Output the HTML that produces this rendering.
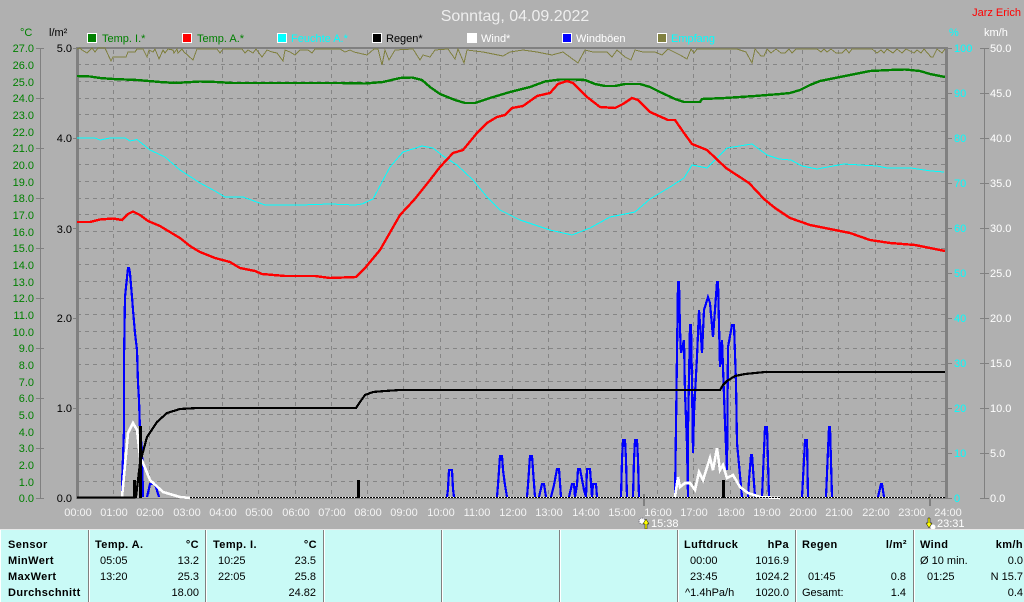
<!DOCTYPE html>
<html><head><meta charset="utf-8"><style>
html,body{margin:0;padding:0;background:#b0b0b0;width:1024px;height:602px;overflow:hidden}
svg{display:block;font-family:"Liberation Sans",Arial,sans-serif;font-size:11px}
.l{fill:#008000;text-anchor:end}.b{fill:#000;text-anchor:end}.c{fill:#0ff}.w{fill:#fff}
.h{fill:#f4f4f4;text-anchor:middle}
.t{fill:#000}.tb{fill:#000;font-weight:bold;letter-spacing:.4px}.r{text-anchor:end}
.g line{stroke:#858585;stroke-width:1;stroke-dasharray:4 4}
polyline{fill:none;shape-rendering:crispEdges}
</style></head><body>
<svg width="1024" height="602" viewBox="0 0 1024 602" xmlns="http://www.w3.org/2000/svg">
<rect width="1024" height="602" fill="#b0b0b0"/>
<text x="515" y="21" text-anchor="middle" fill="#eee" font-size="16">Sonntag, 04.09.2022</text>
<text x="1021" y="16" text-anchor="end" fill="#f00" font-size="11">Jarz Erich</text>
<text x="20" y="36" fill="#008000">°C</text><text x="49" y="36" fill="#000">l/m²</text>
<text x="949" y="36" fill="#0ff">%</text><text x="984" y="36" fill="#fff">km/h</text>
<g stroke="#fff" stroke-width="1" shape-rendering="crispEdges">
<rect x="87.5" y="33.5" width="9" height="9" fill="#008000"/>
<rect x="182.5" y="33.5" width="9" height="9" fill="#f00"/>
<rect x="277.5" y="33.5" width="9" height="9" fill="#0ff"/>
<rect x="372.5" y="33.5" width="9" height="9" fill="#000"/>
<rect x="467.5" y="33.5" width="9" height="9" fill="#fff"/>
<rect x="562.5" y="33.5" width="9" height="9" fill="#00f"/>
<rect x="657.5" y="33.5" width="9" height="9" fill="#808040"/>
</g>
<text x="102" y="42" fill="#008000">Temp. I.*</text><text x="197" y="42" fill="#008000">Temp. A.*</text>
<text x="291" y="42" fill="#0ff">Feuchte A.*</text><text x="386" y="42" fill="#000">Regen*</text>
<text x="481" y="42" fill="#fff">Wind*</text><text x="576" y="42" fill="#fff">Windböen</text>
<text x="671" y="42" fill="#0ff">Empfang</text>

<g class="g" shape-rendering="crispEdges">
<line x1="77" x2="945" y1="64.5" y2="64.5"/><line x1="77" x2="945" y1="81.5" y2="81.5"/><line x1="77" x2="945" y1="98.5" y2="98.5"/><line x1="77" x2="945" y1="114.5" y2="114.5"/><line x1="77" x2="945" y1="131.5" y2="131.5"/><line x1="77" x2="945" y1="148.5" y2="148.5"/><line x1="77" x2="945" y1="164.5" y2="164.5"/><line x1="77" x2="945" y1="181.5" y2="181.5"/><line x1="77" x2="945" y1="198.5" y2="198.5"/><line x1="77" x2="945" y1="214.5" y2="214.5"/><line x1="77" x2="945" y1="231.5" y2="231.5"/><line x1="77" x2="945" y1="248.5" y2="248.5"/><line x1="77" x2="945" y1="264.5" y2="264.5"/><line x1="77" x2="945" y1="281.5" y2="281.5"/><line x1="77" x2="945" y1="298.5" y2="298.5"/><line x1="77" x2="945" y1="314.5" y2="314.5"/><line x1="77" x2="945" y1="331.5" y2="331.5"/><line x1="77" x2="945" y1="348.5" y2="348.5"/><line x1="77" x2="945" y1="364.5" y2="364.5"/><line x1="77" x2="945" y1="381.5" y2="381.5"/><line x1="77" x2="945" y1="398.5" y2="398.5"/><line x1="77" x2="945" y1="414.5" y2="414.5"/><line x1="77" x2="945" y1="431.5" y2="431.5"/><line x1="77" x2="945" y1="448.5" y2="448.5"/><line x1="77" x2="945" y1="464.5" y2="464.5"/><line x1="77" x2="945" y1="481.5" y2="481.5"/>
<line y1="50" y2="497" x1="113.5" x2="113.5"/><line y1="50" y2="497" x1="149.5" x2="149.5"/><line y1="50" y2="497" x1="186.5" x2="186.5"/><line y1="50" y2="497" x1="222.5" x2="222.5"/><line y1="50" y2="497" x1="258.5" x2="258.5"/><line y1="50" y2="497" x1="295.5" x2="295.5"/><line y1="50" y2="497" x1="331.5" x2="331.5"/><line y1="50" y2="497" x1="367.5" x2="367.5"/><line y1="50" y2="497" x1="403.5" x2="403.5"/><line y1="50" y2="497" x1="440.5" x2="440.5"/><line y1="50" y2="497" x1="476.5" x2="476.5"/><line y1="50" y2="497" x1="512.5" x2="512.5"/><line y1="50" y2="497" x1="548.5" x2="548.5"/><line y1="50" y2="497" x1="585.5" x2="585.5"/><line y1="50" y2="497" x1="621.5" x2="621.5"/><line y1="50" y2="497" x1="657.5" x2="657.5"/><line y1="50" y2="497" x1="693.5" x2="693.5"/><line y1="50" y2="497" x1="730.5" x2="730.5"/><line y1="50" y2="497" x1="766.5" x2="766.5"/><line y1="50" y2="497" x1="802.5" x2="802.5"/><line y1="50" y2="497" x1="838.5" x2="838.5"/><line y1="50" y2="497" x1="875.5" x2="875.5"/><line y1="50" y2="497" x1="911.5" x2="911.5"/>
</g>

<g fill="#808080" shape-rendering="crispEdges">
<rect x="76" y="47" width="3" height="452"/><rect x="945" y="47" width="3" height="452"/><rect x="76" y="47" width="871" height="2"/><rect x="76" y="498" width="871" height="1"/>
<rect x="40" y="48" width="1" height="451"/><rect x="984" y="48" width="1" height="451"/>
<rect x="36" y="48" width="8" height="1"/><rect x="36" y="98" width="8" height="1"/><rect x="36" y="148" width="8" height="1"/><rect x="36" y="198" width="8" height="1"/><rect x="36" y="248" width="8" height="1"/><rect x="36" y="298" width="8" height="1"/><rect x="36" y="348" width="8" height="1"/><rect x="36" y="398" width="8" height="1"/><rect x="36" y="448" width="8" height="1"/><rect x="36" y="498" width="8" height="1"/>
<rect x="73" y="48" width="4" height="1"/><rect x="73" y="138" width="4" height="1"/><rect x="73" y="228" width="4" height="1"/><rect x="73" y="318" width="4" height="1"/><rect x="73" y="408" width="4" height="1"/>
<rect x="948" y="48" width="4" height="1"/><rect x="948" y="93" width="4" height="1"/><rect x="948" y="138" width="4" height="1"/><rect x="948" y="183" width="4" height="1"/><rect x="948" y="228" width="4" height="1"/><rect x="948" y="273" width="4" height="1"/><rect x="948" y="318" width="4" height="1"/><rect x="948" y="363" width="4" height="1"/><rect x="948" y="408" width="4" height="1"/><rect x="948" y="453" width="4" height="1"/><rect x="948" y="498" width="4" height="1"/>
<rect x="980" y="48" width="9" height="1"/><rect x="980" y="93" width="9" height="1"/><rect x="980" y="138" width="9" height="1"/><rect x="980" y="183" width="9" height="1"/><rect x="980" y="228" width="9" height="1"/><rect x="980" y="273" width="9" height="1"/><rect x="980" y="318" width="9" height="1"/><rect x="980" y="363" width="9" height="1"/><rect x="980" y="408" width="9" height="1"/><rect x="980" y="453" width="9" height="1"/><rect x="980" y="498" width="9" height="1"/>
<rect x="643" y="494" width="2" height="12"/><rect x="929" y="494" width="2" height="12"/>
</g>

<g class="l">
<text x="34" y="52">27.0</text><text x="34" y="69">26.0</text><text x="34" y="86">25.0</text><text x="34" y="102">24.0</text><text x="34" y="119">23.0</text><text x="34" y="136">22.0</text><text x="34" y="152">21.0</text><text x="34" y="169">20.0</text><text x="34" y="186">19.0</text><text x="34" y="202">18.0</text><text x="34" y="219">17.0</text><text x="34" y="236">16.0</text><text x="34" y="252">15.0</text><text x="34" y="269">14.0</text><text x="34" y="286">13.0</text><text x="34" y="302">12.0</text><text x="34" y="319">11.0</text><text x="34" y="336">10.0</text><text x="34" y="352">9.0</text><text x="34" y="369">8.0</text><text x="34" y="386">7.0</text><text x="34" y="402">6.0</text><text x="34" y="419">5.0</text><text x="34" y="436">4.0</text><text x="34" y="452">3.0</text><text x="34" y="469">2.0</text><text x="34" y="486">1.0</text><text x="34" y="502">0.0</text>
</g>
<g class="b">
<text x="72" y="52">5.0</text><text x="72" y="142">4.0</text><text x="72" y="233">3.0</text><text x="72" y="322">2.0</text><text x="72" y="412">1.0</text><text x="72" y="502">0.0</text>
</g>
<g class="c">
<text x="954" y="52">100</text><text x="954" y="97">90</text><text x="954" y="142">80</text><text x="954" y="187">70</text><text x="954" y="232">60</text><text x="954" y="277">50</text><text x="954" y="322">40</text><text x="954" y="367">30</text><text x="954" y="412">20</text><text x="954" y="457">10</text><text x="954" y="502">0</text>
</g>
<g class="w">
<text x="990" y="52">50.0</text><text x="990" y="97">45.0</text><text x="990" y="142">40.0</text><text x="990" y="187">35.0</text><text x="990" y="232">30.0</text><text x="990" y="277">25.0</text><text x="990" y="322">20.0</text><text x="990" y="367">15.0</text><text x="990" y="412">10.0</text><text x="990" y="457">5.0</text><text x="990" y="502">0.0</text>
</g>
<g class="h">
<text x="78" y="516">00:00</text><text x="114" y="516">01:00</text><text x="150" y="516">02:00</text><text x="187" y="516">03:00</text><text x="223" y="516">04:00</text><text x="259" y="516">05:00</text><text x="296" y="516">06:00</text><text x="332" y="516">07:00</text><text x="368" y="516">08:00</text><text x="404" y="516">09:00</text><text x="441" y="516">10:00</text><text x="477" y="516">11:00</text><text x="513" y="516">12:00</text><text x="549" y="516">13:00</text><text x="586" y="516">14:00</text><text x="622" y="516">15:00</text><text x="658" y="516">16:00</text><text x="694" y="516">17:00</text><text x="731" y="516">18:00</text><text x="767" y="516">19:00</text><text x="803" y="516">20:00</text><text x="839" y="516">21:00</text><text x="876" y="516">22:00</text><text x="912" y="516">23:00</text><text x="948" y="516">24:00</text>
</g>

<!-- Empfang -->
<polyline stroke="#808040" stroke-width="1" points="77,49 80,48 82,50 87,53 92,48 95,52 98,48 105,48 111,61 113,57 126,57 128,52 135,52 137,49 143,49 147,57 149,50 153,52 155,49 159,59 163,50 165,53 168,49 173,50 174,53 177,49 178,53 182,49 184,52 193,60 197,49 217,49 220,53 223,49 242,49 245,53 248,50 253,53 256,49 262,57 267,50 272,52 277,53 283,61 285,50 290,52 295,55 300,50 308,50 312,53 315,49 340,49 345,52 350,50 354,52 367,55 374,49 378,49 382,65 385,50 389,60 395,50 413,49 420,60 423,55 430,57 435,50 448,49 455,59 458,49 464,63 467,50 483,52 503,56 510,52 523,50 537,52 552,55 563,52 578,63 585,50 593,52 598,52 607,52 612,57 617,50 625,57 631,60 635,50 643,52 655,52 662,55 668,49 680,55 687,59 691,49 694,53 697,49 737,49 746,52 752,63 755,49 761,56 764,56 767,49 771,53 776,49 781,53 785,53 789,49 792,53 796,49 817,49 821,52 824,49 827,52 831,49 836,53 842,53 846,49 849,53 852,49 872,49 877,53 881,50 884,53 887,49 893,53 897,49 902,53 906,49 914,53 917,50 921,53 924,49 931,57 933,57 937,49 942,53 945,49"/>
<!-- Feuchte -->
<polyline stroke="#0ff" stroke-width="1" points="77,138 95,138 100,140 110,138 125,138 130,141 137,139.5 150,150 165,157 180,170 200,183 215,191 225,197 243,197 265,205 300,205 330,204 355,205 362,204 373,199 390,167 403,152 422,146 433,148 443,156 457,165 473,180 487,197 500,210 520,220 550,230 572,235 590,228 610,217 635,212 650,199 670,187 684,178 692,165 707,168 727,148 752,144 767,155 779,159 791,160 802,166 817,169 844,164 877,166 887,168 911,168 931,171 944,172"/>
<!-- Temp I -->
<polyline stroke="#008000" stroke-width="2.4" points="77,76 90,76.5 100,78 113,79 137,80 160,82 175,83 200,81.5 216,82 232,83 340,83 365,83.5 383,82 400,78 412,77.5 422,80 430,87 440,94 455,100 465,103 475,103 478,102 490,98 510,92 530,87 545,81.5 560,79.5 575,79.5 585,80 595,84 605,86 615,86 625,84 640,84 650,87 660,92 675,99 684,102 700,102 702,99 725,98 755,96 780,94 790,93 800,90 810,85 820,81 835,78 850,75 870,71 890,70 905,69.5 920,71 930,74 945,77"/>
<!-- Temp A -->
<polyline stroke="#f00" stroke-width="2.4" points="77,222 90,222 100,219.5 113,218.5 122,220 128,214 133,211.5 140,215 148,221 160,226 170,232 180,238 190,246 200,252 215,258 230,262 240,268 255,271 262,274 285,276 315,276 330,278 356,277 365,268 380,250 400,215 414,200 430,180 440,167 453,153 463,150 477,133 487,123 497,117 505,115 512,108 523,106 537,96 550,93 558,84 567,81 573,83 587,97 600,107 615,108 623,104 632,98 638,100 650,112 668,120 675,120 684,133 692,144 707,150 726,168 749,183 764,199 775,208 790,218 810,225 830,229 850,233 870,240 890,243 915,245 930,248 945,251"/>
<!-- Windböen -->
<g stroke="#00f" stroke-width="2.2">
<polyline points="122,497 122,483 124,430 124,360 125,297 126,287 128,268 129,268 130,273 132,297 133,310 135,333 137,350 138,383 139,400 140,430 142,450 143,497"/>
<polyline points="147,497 150,484 155,484 159,497"/>
<polyline points="447,497 448,489 449,470 452,470 453,489 454,497"/>
<polyline points="497,497 498,485 500,456 502,456 503,470 505,485 507,497"/>
<polyline points="527,497 528,485 530,456 532,456 533,470 535,497"/>
<polyline points="539,497 542,484 544,484 546,497"/>
<polyline points="551,497 554,485 557,469 559,469 561,497"/>
<polyline points="569,497 572,484 574,484 575,497 577,485 578,469 580,469 584,490 586,497 587,469 590,469 592,497 593,484 596,484 597,497"/>
<polyline points="621,497 622,460 623,440 625,440 626,460 627,497"/>
<polyline points="633,497 634,460 635,440 637,440 638,460 639,497"/>
<polyline points="675,497 676,427 677,353 678,282 679,282 680,330 681,353 684,340 685,393 687,445 688,497 688,430 690,325 691,325 692,383 693,453 694,413 697,357 699,310 701,337 702,353 704,310 708,297 710,303 713,337 717,282 718,282 720,367 722,340 725,423 727,470 728,347 732,325 734,325 736,383 737,443 742,497"/>
<polyline points="748,497 749,480 751,455 752,455 755,497"/>
<polyline points="762,497 765,427 767,427 769,497"/>
<polyline points="802,497 804,460 805,440 807,440 808,497"/>
<polyline points="826,497 828,450 829,427 830,427 832,497"/>
<polyline points="878,497 881,484 882,484 884,497"/>
</g>
<!-- Wind -->
<polyline stroke="#fff" stroke-width="2.6" points="122,497 128,433 133,423 137,430 140,457 143,463 150,480 163,492 180,497 190,498"/>
<polyline stroke="#fff" stroke-width="2.6" points="675,497 678,477 680,487 685,483 690,483 695,490 699,472 703,480 710,458 713,470 717,448 720,470 723,465 727,478 733,475 740,487 748,493 760,497 780,498"/>
<!-- Regen -->
<line x1="190" y1="497.5" x2="945" y2="497.5" stroke="#fff" stroke-width="1" shape-rendering="crispEdges"/>
<line x1="190" y1="497.5" x2="945" y2="497.5" stroke="#000" stroke-width="1" stroke-dasharray="2 1" shape-rendering="crispEdges"/>
<polyline stroke="#000" stroke-width="2.2" points="77,497.5 134,497.5 136,497 140,463 147,437 157,422 167,413 180,409 197,408 356,408 360,402 365,395 373,392 385,391 400,390 720,390 723,385 727,381 735,376 745,374 765,372 945,372"/>
<g fill="#000" shape-rendering="crispEdges">
<rect x="133" y="480" width="3" height="18"/><rect x="139" y="426" width="3" height="72"/>
<rect x="357" y="480" width="3" height="18"/><rect x="722" y="480" width="3" height="18"/>
</g>

<!-- markers -->
<circle cx="642" cy="521" r="3" fill="#fff" stroke="#667" stroke-width="1" stroke-dasharray="1 1"/>
<path d="M646 519l3 5h-2v5h-2v-5h-2z" fill="#ff0" stroke="#000" stroke-width=".5"/>
<text x="651" y="527" fill="#fff">15:38</text>
<path d="M929 528l3-5h-2v-5h-2v5h-2z" fill="#ff0" stroke="#000" stroke-width=".5"/>
<circle cx="933" cy="527" r="2.5" fill="#fff"/>
<text x="937" y="527" fill="#fff">23:31</text>

<!-- table -->
<rect x="0" y="530" width="1024" height="72" fill="#c9faf6"/>
<rect x="0" y="529" width="1024" height="1" fill="#e8e8e8"/>
<g fill="#808080" shape-rendering="crispEdges">
<rect x="88" y="530" width="1" height="72"/><rect x="205" y="530" width="1" height="72"/><rect x="323" y="530" width="1" height="72"/><rect x="441" y="530" width="1" height="72"/><rect x="559" y="530" width="1" height="72"/><rect x="677" y="530" width="1" height="72"/><rect x="795" y="530" width="1" height="72"/><rect x="913" y="530" width="1" height="72"/>
</g>
<g fill="#fff" shape-rendering="crispEdges">
<rect x="0" y="530" width="1" height="72"/><rect x="89" y="530" width="1" height="72"/><rect x="206" y="530" width="1" height="72"/><rect x="324" y="530" width="1" height="72"/><rect x="442" y="530" width="1" height="72"/><rect x="560" y="530" width="1" height="72"/><rect x="678" y="530" width="1" height="72"/><rect x="796" y="530" width="1" height="72"/><rect x="914" y="530" width="1" height="72"/>
</g>
<text class="tb" x="8" y="548">Sensor</text><text class="tb" x="8" y="564">MinWert</text><text class="tb" x="8" y="580">MaxWert</text><text class="tb" x="8" y="596">Durchschnitt</text>
<text class="tb" x="95" y="548">Temp. A.</text><text class="tb r" x="199" y="548">°C</text>
<text class="t" x="100" y="564">05:05</text><text class="t r" x="199" y="564">13.2</text>
<text class="t" x="100" y="580">13:20</text><text class="t r" x="199" y="580">25.3</text>
<text class="t r" x="199" y="596">18.00</text>
<text class="tb" x="213" y="548">Temp. I.</text><text class="tb r" x="317" y="548">°C</text>
<text class="t" x="218" y="564">10:25</text><text class="t r" x="316" y="564">23.5</text>
<text class="t" x="218" y="580">22:05</text><text class="t r" x="316" y="580">25.8</text>
<text class="t r" x="316" y="596">24.82</text>
<text class="tb" x="684" y="548">Luftdruck</text><text class="tb r" x="789" y="548">hPa</text>
<text class="t" x="690" y="564">00:00</text><text class="t r" x="789" y="564">1016.9</text>
<text class="t" x="690" y="580">23:45</text><text class="t r" x="789" y="580">1024.2</text>
<text class="t" x="685" y="596">^1.4hPa/h</text><text class="t r" x="789" y="596">1020.0</text>
<text class="tb" x="802" y="548">Regen</text><text class="tb r" x="907" y="548">l/m²</text>
<text class="t" x="808" y="580">01:45</text><text class="t r" x="906" y="580">0.8</text>
<text class="t" x="802" y="596">Gesamt:</text><text class="t r" x="906" y="596">1.4</text>
<text class="tb" x="920" y="548">Wind</text><text class="tb r" x="1023" y="548">km/h</text>
<text class="t" x="920" y="564">Ø 10 min.</text><text class="t r" x="1023" y="564">0.0</text>
<text class="t" x="927" y="580">01:25</text><text class="t r" x="1023" y="580">N 15.7</text>
<text class="t r" x="1023" y="596">0.4</text>
</svg>
</body></html>
